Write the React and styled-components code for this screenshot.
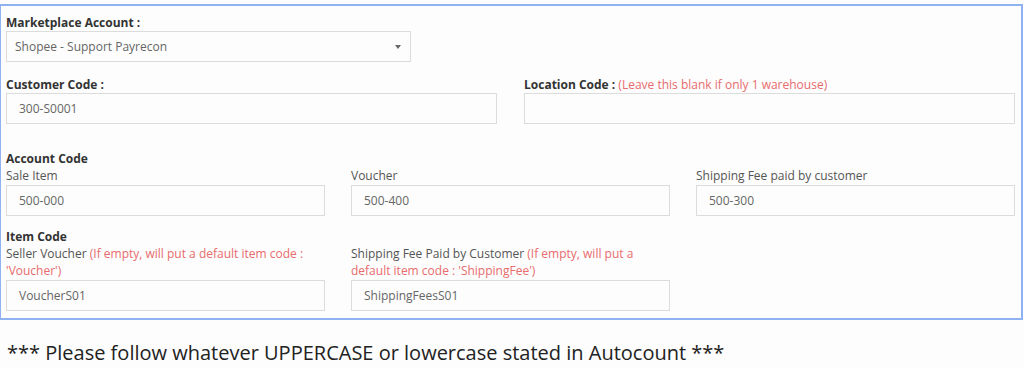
import React from 'react';
import styled, { createGlobalStyle } from 'styled-components';

const GlobalStyle = createGlobalStyle`
  body {
    margin: 0;
    background: #fcfdfc;
    font-family: "Open Sans", "DejaVu Sans", sans-serif;
  }
`;

const Panel = styled.div`
  margin: 4px 1px 0 -1px;
  border: 2px solid #8fb3f2;
  padding: 8px 5px 7px 5px;
  height: 316px;
  box-sizing: border-box;
  display: flex;
  flex-direction: column;
`;

const Field = styled.div`
  display: flex;
  flex-direction: column;
  margin-bottom: ${p => p.mb || 0}px;
`;

const Label = styled.label`
  font-size: 12px;
  font-weight: 700;
  color: #333;
  line-height: 17px;
  height: 17px;
  white-space: nowrap;
`;

const SubLabel = styled.div`
  font-size: 12px;
  color: #555;
  line-height: 17px;
  margin-bottom: 1px;
  min-height: ${p => (p.lines || 1) * 17}px;
`;

const Hint = styled.span`
  color: #e86b6d;
  font-weight: 400;
`;

const Input = styled.div`
  height: 31px;
  box-sizing: border-box;
  border: 1px solid #dcdcdc;
  background: #fcfdfc;
  padding: 0 ${p => (p.select ? '9px 0 8px' : '12px')};
  display: flex;
  align-items: center;
  justify-content: space-between;
  font-size: 12px;
  color: #666;
  width: ${p => (p.w ? p.w + 'px' : 'auto')};
`;

const Caret = styled.span`
  width: 0;
  height: 0;
  border-left: 3px solid transparent;
  border-right: 3px solid transparent;
  border-top: 4px solid #666;
`;

const TwoCol = styled.div`
  display: grid;
  grid-template-columns: 491px 491px;
  column-gap: 27px;
`;

const ThreeCol = styled.div`
  display: grid;
  grid-template-columns: 319px 319px 319px;
  column-gap: 26px;
`;

const Section = styled.div`
  font-size: 12px;
  font-weight: 700;
  color: #333;
  line-height: 16px;
  margin-top: ${p => p.mt || 0}px;
`;

const Note = styled.p`
  margin: 19px 0 0 7px;
  font-size: 20px;
  line-height: 28px;
  color: #222;
`;

export default function App() {
  return (
    <>
      <GlobalStyle />
      <Panel>
        <Field mb={14}>
          <Label>Marketplace Account :</Label>
          <Input w={405} select>
            Shopee - Support Payrecon
            <Caret />
          </Input>
        </Field>
        <TwoCol>
          <Field>
            <Label>Customer Code :</Label>
            <Input>300-S0001</Input>
          </Field>
          <Field>
            <Label>
              Location Code : <Hint>(Leave this blank if only 1 warehouse)</Hint>
            </Label>
            <Input />
          </Field>
        </TwoCol>
        <Section mt={27}>Account Code</Section>
        <ThreeCol>
          <Field>
            <SubLabel>Sale Item</SubLabel>
            <Input>500-000</Input>
          </Field>
          <Field>
            <SubLabel>Voucher</SubLabel>
            <Input>500-400</Input>
          </Field>
          <Field>
            <SubLabel>Shipping Fee paid by customer</SubLabel>
            <Input>500-300</Input>
          </Field>
        </ThreeCol>
        <Section mt={13}>Item Code</Section>
        <ThreeCol>
          <Field>
            <SubLabel lines={2}>
              Seller Voucher <Hint>(If empty, will put a default item code : 'Voucher')</Hint>
            </SubLabel>
            <Input>VoucherS01</Input>
          </Field>
          <Field>
            <SubLabel lines={2}>
              Shipping Fee Paid by Customer <Hint>(If empty, will put a default item code : 'ShippingFee')</Hint>
            </SubLabel>
            <Input>ShippingFeesS01</Input>
          </Field>
        </ThreeCol>
      </Panel>
      <Note>*** Please follow whatever UPPERCASE or lowercase stated in Autocount ***</Note>
    </>
  );
}
